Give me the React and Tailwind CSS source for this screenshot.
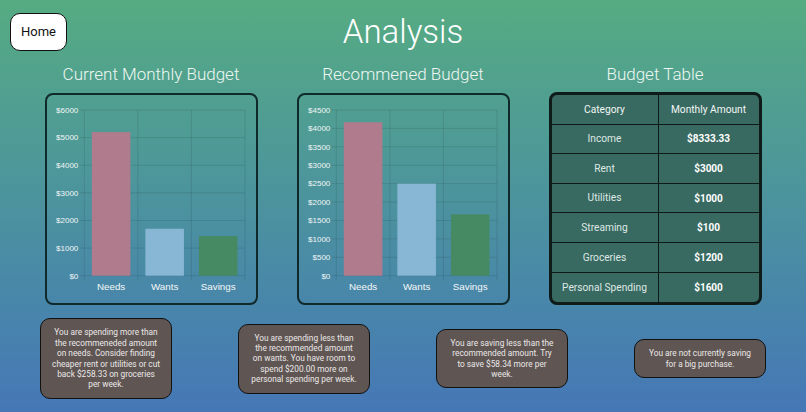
import React from 'react'

const BUDGET = [
    { category: 'Income', amount: '$8333.33' },
    { category: 'Rent', amount: '$3000' },
    { category: 'Utilities', amount: '$1000' },
    { category: 'Streaming', amount: '$100' },
    { category: 'Groceries', amount: '$1200' },
    { category: 'Personal Spending', amount: '$1600' },
]

const MESSAGES = [
    'You are spending more than the recommeneded amount on needs. Consider finding cheaper rent or utilities or cut back $258.33 on groceries per week.',
    'You are spending less than the recommended amount on wants. You have room to spend $200.00 more on personal spending per week.',
    'You are saving less than the recommended amount. Try to save $58.34 more per week.',
    'You are not currently saving for a big purchase.',
]

const COLORS = ['#b07b8c', '#87b7d4', '#468a63']
const LABELS = ['Needs', 'Wants', 'Savings']

function BarChart({ values, max, step }) {
    const L = 37.3
    const R = 198
    const T = 15
    const B = 180.7
    const cw = (R - L) / 3
    const y = v => B - (v / max) * (B - T)
    const ticks = []
    for (let v = 0; v <= max; v += step) ticks.push(v)

    return (
        <div className="w-[213px] h-[212px] border-2 border-[#10292a] rounded-[8px]">
            <svg width="209" height="208" viewBox="0 0 209 208" style={{ fontFamily: '"Liberation Sans", Arial, sans-serif' }}>
                {ticks.map(v => (
                    <g key={v}>
                        <line x1={L - 5} x2={R} y1={y(v)} y2={y(v)} stroke="rgba(0,0,0,0.1)" strokeWidth="1" />
                        <text x={L - 6} y={y(v) + 2.8} fontSize="8" textAnchor="end" fill="#f1f5f5">${v}</text>
                    </g>
                ))}
                {[0, 1, 2, 3].map(i => (
                    <line key={i} x1={L + i * cw} x2={L + i * cw} y1={T} y2={B + 5} stroke="rgba(0,0,0,0.1)" strokeWidth="1" />
                ))}
                {values.map((v, i) => {
                    const bw = cw * 0.72
                    const x = L + i * cw + (cw - bw) / 2
                    return <rect key={i} x={x} y={y(v)} width={bw} height={B - y(v)} fill={COLORS[i]} />
                })}
                {LABELS.map((l, i) => (
                    <text key={l} x={L + i * cw + cw / 2} y="195" fontSize="9.8" textAnchor="middle" fill="#f4f7f7">{l}</text>
                ))}
            </svg>
        </div>
    )
}

function BudgetTable() {
    return (
        <div className="w-[213px] border-[3px] border-[#0e1b19] rounded-[8px] overflow-hidden bg-[#386a61] text-[10.2px]">
            <div className="grid grid-cols-[107px_1fr] h-[29.6px] border-b border-[#0e1b19]">
                <div className="flex items-center justify-center border-r border-[#0e1b19] text-[#f2f6f4]">Category</div>
                <div className="flex items-center justify-center text-[#f2f6f4]">Monthly Amount</div>
            </div>
            {BUDGET.map((row, i) => (
                <div
                    key={row.category}
                    className={`grid grid-cols-[107px_1fr] h-[29.6px] ${i < BUDGET.length - 1 ? 'border-b border-[#0e1b19]' : ''}`}
                >
                    <div className="flex items-center justify-center border-r border-[#0e1b19] text-[#dfe8e5]">{row.category}</div>
                    <div className="flex items-center justify-center font-bold text-[10px] text-white">{row.amount}</div>
                </div>
            ))}
        </div>
    )
}

export default function App() {
    return (
        <div
            className="w-full h-[412px] overflow-hidden flex flex-col bg-linear-to-b from-[#56ab81] to-[#4677b6]"
            style={{ fontFamily: 'Roboto, "Liberation Sans", sans-serif' }}
        >
            <div className="grid grid-cols-[1fr_auto_1fr] items-start">
                <div>
                    <button className="mt-[13px] ml-[10px] w-[57px] h-[38px] bg-white border border-[#111] rounded-[10px] text-[13px] text-[#111]">
                        Home
                    </button>
                </div>
                <h1 className="mt-[12px] text-[33px] leading-[40px] font-light text-white">Analysis</h1>
                <div />
            </div>

            <div className="flex justify-center gap-[39px] mt-[12px]">
                <div className="w-[213px] flex flex-col items-center">
                    <h2 className="text-[17px] leading-[20px] font-light text-[#eef7f1]">Current Monthly Budget</h2>
                    <div className="mt-[9px]">
                        <BarChart values={[5200, 1700, 1433.33]} max={6000} step={1000} />
                    </div>
                </div>
                <div className="w-[213px] flex flex-col items-center">
                    <h2 className="text-[17px] leading-[20px] font-light text-[#eef7f1]">Recommened Budget</h2>
                    <div className="mt-[9px]">
                        <BarChart values={[4166.67, 2500, 1666.67]} max={4500} step={500} />
                    </div>
                </div>
                <div className="w-[213px] flex flex-col items-center">
                    <h2 className="text-[17px] leading-[20px] font-light text-[#eef7f1]">Budget Table</h2>
                    <div className="mt-[8px]">
                        <BudgetTable />
                    </div>
                </div>
            </div>

            <div className="flex-1 flex items-center justify-center gap-[66px]">
                {MESSAGES.map(m => (
                    <div
                        key={m}
                        className="w-[132px] px-[10.75px] py-[8px] bg-[#5f5553] border border-[#111] rounded-[10px] text-center text-[8.3px] leading-[10.4px] text-[#ebe8e7]"
                    >
                        {m}
                    </div>
                ))}
            </div>
        </div>
    )
}
